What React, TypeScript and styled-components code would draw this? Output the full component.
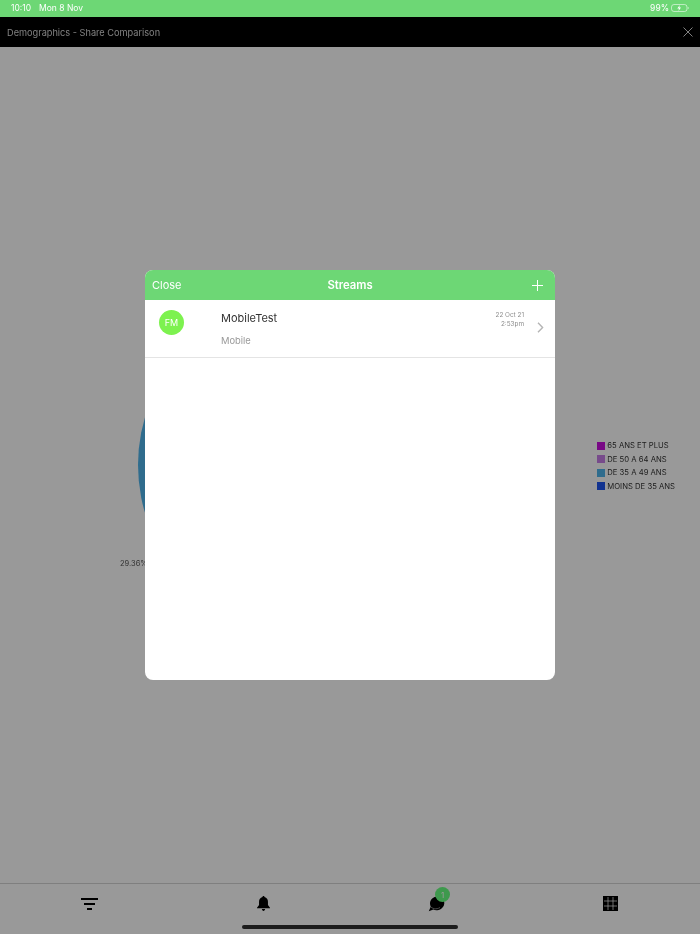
import React from "react";
import styled, { createGlobalStyle } from "styled-components";

const GlobalStyle = createGlobalStyle`
  html, body {
    margin: 0;
    padding: 0;
    background: #fff;
    font-family: Inter, "Liberation Sans", sans-serif;
  }
`;

const Page = styled.div`
  position: relative;
  width: 700px;
  height: 934px;
  display: flex;
  flex-direction: column;
  overflow: hidden;
  will-change: transform;
`;

const StatusBar = styled.div`
  height: 17px;
  flex: none;
  box-sizing: border-box;
  padding: 0 11px 1px 11px;
  display: flex;
  align-items: center;
  justify-content: space-between;
  background: #6dd775;
  color: #fff;
  font-size: 8.5px;
`;

const StatusGroup = styled.div`
  display: flex;
  align-items: center;
  gap: 8px;
`;

const BatteryGroup = styled(StatusGroup)`
  gap: 2px;
`;

const Content = styled.div`
  position: relative;
  flex: 1;
  display: flex;
  flex-direction: column;
  min-height: 0;
`;

const Header = styled.div`
  height: 30px;
  flex: none;
  box-sizing: border-box;
  padding: 0 7px;
  display: flex;
  align-items: center;
  justify-content: space-between;
  background: #000;
  color: #d8d8d8;
  font-size: 9.2px;
`;

const Main = styled.div`
  position: relative;
  flex: 1;
  display: flex;
  align-items: center;
  justify-content: space-between;
  padding: 0 25px 0 138px;
  background: #fff;
`;

const PieLabel = styled.span`
  position: absolute;
  left: 120px;
  top: 512px;
  font-size: 7.5px;
  color: #555;
`;

const Legend = styled.div`
  display: flex;
  flex-direction: column;
  gap: 3.67px;
  margin-top: 2px;
`;

const LegendRow = styled.div`
  display: flex;
  align-items: center;
  gap: 2px;
  height: 10px;
  font-size: 7.7px;
  color: #333;
`;

const Swatch = styled.span<{ $color: string }>`
  width: 8px;
  height: 8px;
  background: ${(props) => props.$color};
`;

const TabBar = styled.div`
  height: 51px;
  flex: none;
  box-sizing: border-box;
  padding: 0 3px 11px;
  display: grid;
  grid-template-columns: repeat(4, 1fr);
  align-items: center;
  justify-items: center;
  background: #fff;
  border-top: 1px solid #d4d4d4;
`;

const TabIcon = styled.div`
  position: relative;
  display: flex;
`;

const Badge = styled.span`
  position: absolute;
  top: -8px;
  left: 7px;
  width: 15px;
  height: 15px;
  border-radius: 50%;
  display: flex;
  align-items: center;
  justify-content: center;
  background: #68ff80;
  color: #fff;
  font-size: 8px;
`;

const Overlay = styled.div`
  position: absolute;
  inset: 0;
  padding-bottom: 1px;
  display: flex;
  align-items: center;
  justify-content: center;
  background: rgba(0, 0, 0, 0.4);
`;

const Modal = styled.div`
  width: 410px;
  height: 410px;
  border-radius: 8px;
  overflow: hidden;
  background: #fff;
`;

const ModalHeader = styled.div`
  height: 30px;
  box-sizing: border-box;
  padding: 0 7px;
  display: grid;
  grid-template-columns: 1fr auto 1fr;
  align-items: center;
  background: #6dd775;
  color: #fff;
  font-size: 11px;
`;

const ModalTitle = styled.span`
  font-size: 11.3px;
  font-weight: 600;
`;

const AddButton = styled.span`
  display: flex;
  justify-content: flex-end;
  padding-right: 5px;
`;

const StreamRow = styled.div`
  height: 58px;
  box-sizing: border-box;
  display: flex;
  padding: 10px 11px 0 14px;
  border-bottom: 1px solid #e4e4e4;
`;

const Avatar = styled.div`
  width: 25px;
  height: 25px;
  flex: none;
  border-radius: 50%;
  display: flex;
  align-items: center;
  justify-content: center;
  background: #7df24f;
  color: #fff;
  font-size: 9px;
`;

const StreamInfo = styled.div`
  flex: 1;
  padding: 1px 0 0 37px;
`;

const StreamName = styled.div`
  font-size: 11px;
  line-height: 15px;
  color: #333;
`;

const StreamType = styled.div`
  margin-top: 9px;
  font-size: 9.4px;
  line-height: 12px;
  color: #999;
`;

const StreamDate = styled.div`
  padding-top: 1px;
  text-align: right;
  font-size: 6.4px;
  line-height: 8.5px;
  color: #8e8e8e;
`;

const Chevron = styled.div`
  margin: 12px 0 0 13px;
  display: flex;
`;

const HomeIndicator = styled.div`
  position: absolute;
  left: 242px;
  bottom: 5px;
  width: 216px;
  height: 4px;
  border-radius: 2px;
  background: #1c1c1c;
`;

const legendItems = [
  { label: "65 ANS ET PLUS", color: "#c80ede" },
  { label: "DE 50 A 64 ANS", color: "#c77ee8" },
  { label: "DE 35 A 49 ANS", color: "#4fb5ec" },
  { label: "MOINS DE 35 ANS", color: "#1f55f0" },
];

const App: React.FC = () => {
  return (
    <Page>
      <GlobalStyle />
      <StatusBar>
        <StatusGroup>
          <span>10:10</span>
          <span>Mon 8 Nov</span>
        </StatusGroup>
        <BatteryGroup>
          <span>99%</span>
          <svg width="18" height="8" viewBox="0 0 18 8">
            <rect x="0.5" y="0.5" width="15.500" height="7" rx="2.500" fill="none" stroke="#fff" strokeOpacity="0.55" />
            <path d="M16.800 2.700v2.600c.7-.2 1.100-.7 1.100-1.300s-.4-1.100-1.100-1.300z" fill="#fff" fillOpacity="0.55" />
            <path d="M8.800 1 6.300 4.400h1.700l-.5 2.600 2.500-3.400H8.300z" fill="#fff" />
          </svg>
        </BatteryGroup>
      </StatusBar>
      <Content>
        <Header>
          <span>Demographics - Share Comparison</span>
          <svg width="10" height="10" viewBox="0 0 10 10">
            <path d="M.5.5l9 9M9.500.5l-9 9" stroke="#d8d8d8" strokeWidth="1" fill="none" />
          </svg>
        </Header>
        <Main>
          <svg width="336" height="336" viewBox="0 0 336 336">
            <circle cx="168" cy="168" r="168" fill="#4fb5ec" />
          </svg>
          <PieLabel>29.36%</PieLabel>
          <Legend>
            {legendItems.map((item) => (
              <LegendRow key={item.label}>
                <Swatch $color={item.color} />
                {item.label}
              </LegendRow>
            ))}
          </Legend>
        </Main>
        <TabBar>
          <TabIcon>
            <svg width="17" height="12" viewBox="0 0 17 12">
              <path d="M0 1h17M3 6h11M6 11h5" stroke="#000" strokeWidth="1.800" fill="none" />
            </svg>
          </TabIcon>
          <TabIcon>
            <svg width="13" height="15" viewBox="0 0 14 16">
              <path d="M7 0c.7 0 1.100.5 1.100 1.100C10.500 1.700 11.800 3.600 11.800 6v3.500L14 12.500V13H0v-.5l2.200-3V6c0-2.400 1.300-4.300 3.700-4.900C5.900.5 6.300 0 7 0zM5.200 14h3.600c-.2 1.100-.9 2-1.800 2s-1.600-.9-1.800-2z" fill="#000" />
            </svg>
          </TabIcon>
          <TabIcon>
            <svg width="17" height="17" viewBox="0 0 17 17">
              <path d="M9.500 1.500C5.500 1.500 2 4.500 2 8.500c0 1.200.3 2.200.8 3.100L.8 16.300l4.500-1.700c1.200.6 2.600.9 4 .7 4-.5 7-3.600 7-7.300 0-3.800-3-6.500-6.800-6.500z" fill="#000" />
              <path d="M2.300 11.300c1.500 2.300 6 3.600 9.700 1.200" stroke="#999" strokeWidth="0.800" fill="none" />
            </svg>
            <Badge>1</Badge>
          </TabIcon>
          <TabIcon>
            <svg width="15" height="15" viewBox="0 0 15 15">
              <rect width="15" height="15" fill="#000" />
              <path d="M5 1v13M10 1v13M1 5h13M1 10h13" stroke="#fff" strokeWidth="0.700" fill="none" />
            </svg>
          </TabIcon>
        </TabBar>
        <Overlay>
          <Modal>
            <ModalHeader>
              <span>Close</span>
              <ModalTitle>Streams</ModalTitle>
              <AddButton>
                <svg width="11" height="11" viewBox="0 0 11 11">
                  <path d="M5.500 0v11M0 5.500h11" stroke="#fff" strokeWidth="1" fill="none" />
                </svg>
              </AddButton>
            </ModalHeader>
            <StreamRow>
              <Avatar>FM</Avatar>
              <StreamInfo>
                <StreamName>MobileTest</StreamName>
                <StreamType>Mobile</StreamType>
              </StreamInfo>
              <StreamDate>
                22 Oct 21
                <br />
                2:53pm
              </StreamDate>
              <Chevron>
                <svg width="7" height="11" viewBox="0 0 7 11">
                  <path d="M1 .8l4.600 4.700L1 10.200" stroke="#b5b5b5" strokeWidth="1.400" fill="none" />
                </svg>
              </Chevron>
            </StreamRow>
          </Modal>
        </Overlay>
        <HomeIndicator />
      </Content>
    </Page>
  );
};

export default App;
